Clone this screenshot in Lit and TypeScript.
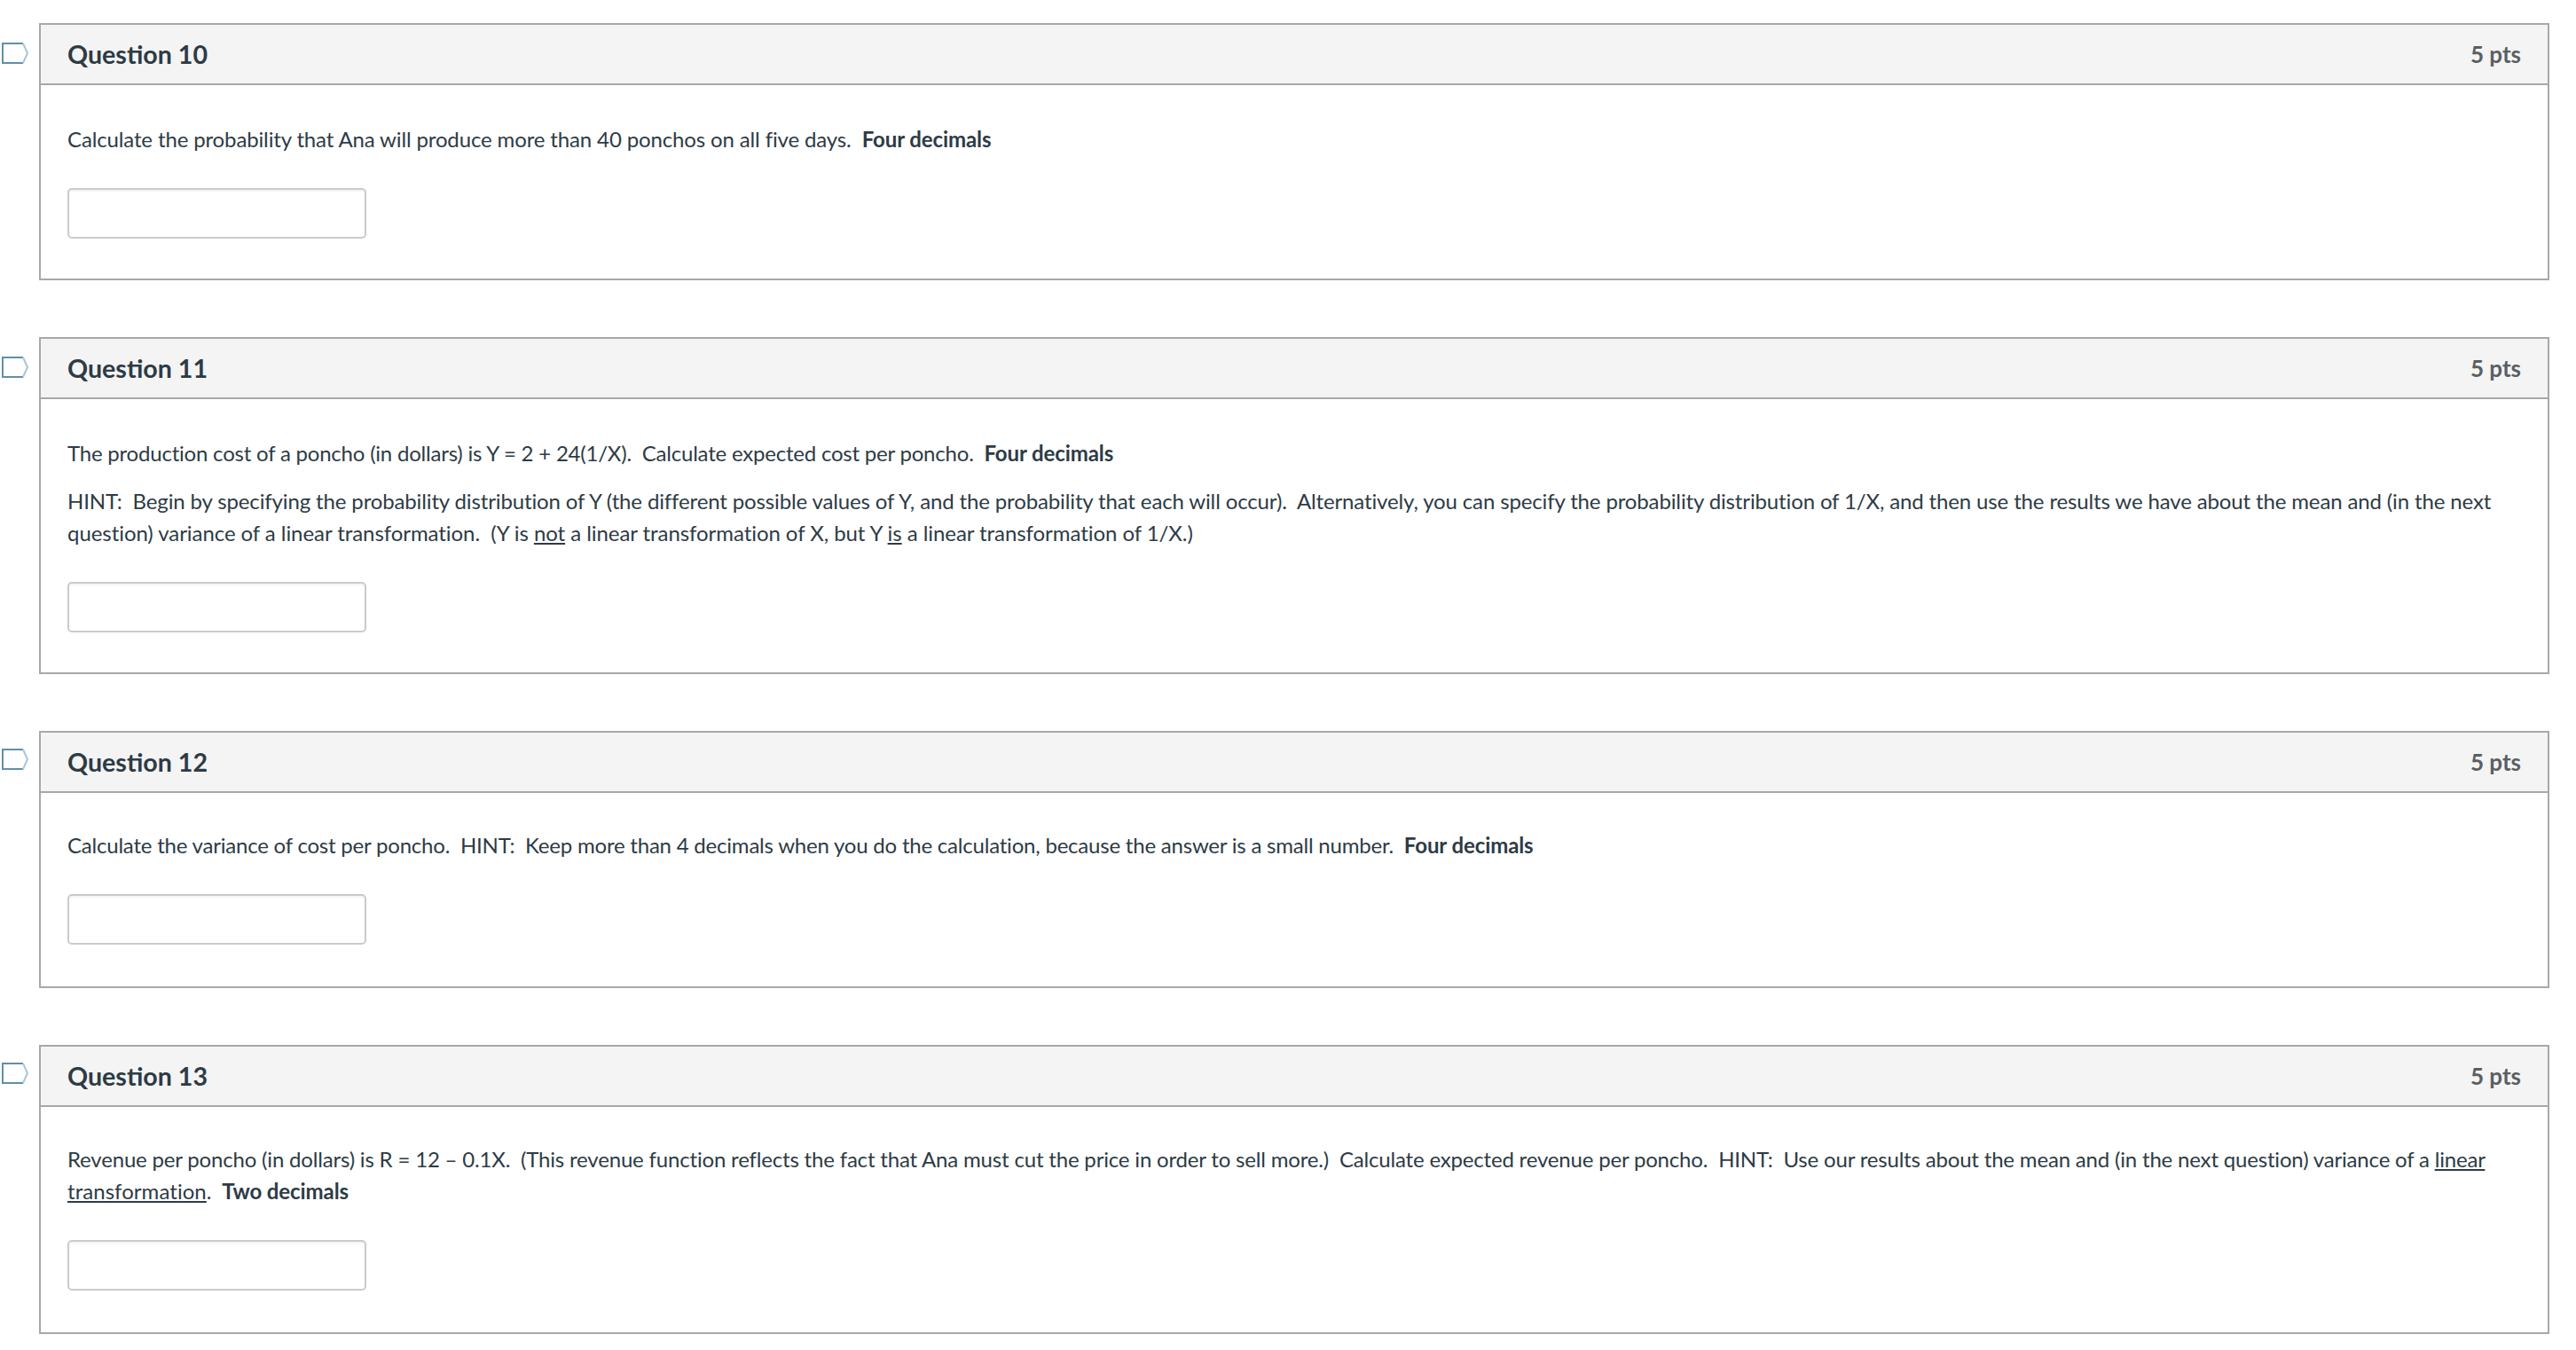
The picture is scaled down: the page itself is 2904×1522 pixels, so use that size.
import { LitElement, html, css } from "lit";
import { customElement } from "lit/decorators.js";

const questions = [
  {
    n: 10,
    raised: false,
    body: html`<p class="loose">Calculate the probability that Ana will produce more than 40 ponchos on all five days.&nbsp; <strong>Four decimals</strong></p>`,
  },
  {
    n: 11,
    raised: false,
    body: html`<p>The production cost of a poncho (in dollars) is Y = 2 + 24(1/X).&nbsp; Calculate expected cost per poncho.&nbsp; <strong>Four decimals</strong></p>
      <p class="loose">HINT:&nbsp; Begin by specifying the probability distribution of Y (the different possible values of Y, and the probability that each will occur).&nbsp; Alternatively, you can specify the probability distribution of 1/X, and then use the results we have about the mean and (in the next <span class="wide">question) variance of a linear transformation.&nbsp; (Y is <u>not</u> a linear transformation of X, but Y <u>is</u> a linear transformation of 1/X.)</span></p>`,
  },
  {
    n: 12,
    raised: true,
    body: html`<p>Calculate the variance of cost per poncho.&nbsp; HINT:&nbsp; Keep more than 4 decimals when you do the calculation, because the answer is a small number.&nbsp; <strong>Four decimals</strong></p>`,
  },
  {
    n: 13,
    raised: true,
    body: html`<p class="mid">Revenue per poncho (in dollars) is R = 12 – 0.1X.&nbsp; (This revenue function reflects the fact that Ana must cut the price in order to sell more.)&nbsp; Calculate expected revenue per poncho.&nbsp; HINT:&nbsp; Use our results about the mean and (in the next question) variance of a <u>linear</u> <u class="wider">transformation</u>.&nbsp; <strong>Two decimals</strong></p>`,
  },
];

@customElement("app-root")
export class AppRoot extends LitElement {
  static styles = css`
    :host {
      display: block;
      font-family: Lato, "Open Sans", sans-serif;
      color: #2d3b45;
      background: #fff;
    }
    .page {
      display: flex;
      flex-direction: column;
      gap: 64px;
      padding: 26px 30px 18px 2px;
    }
    .row {
      display: flex;
      align-items: flex-start;
      gap: 12px;
    }
    .flag {
      flex: none;
      width: 30px;
      height: 24px;
      margin-top: 22px;
    }
    .raised .flag {
      margin-top: 20px;
    }
    .card {
      flex: 1;
      min-width: 0;
      border: 2px solid #a8a8a8;
      background: #fff;
    }
    .head {
      display: flex;
      justify-content: space-between;
      align-items: center;
      height: 68px;
      box-sizing: border-box;
      padding: 0 30px;
      background: #f4f4f4;
      border-bottom: 2px solid #a8a8a8;
    }
    .title {
      font-size: 28.6px;
      font-weight: 700;
    }
    .pts {
      font-size: 26px;
      font-weight: 700;
      color: #5a5f63;
    }
    .body {
      padding: 43px 30px 45px;
      font-size: 24px;
      line-height: 36px;
      letter-spacing: -0.21px;
    }
    .raised .body {
      padding-top: 41px;
      padding-bottom: 47px;
    }
    p {
      margin: 0 0 18px;
    }
    .loose {
      letter-spacing: -0.135px;
    }
    .mid {
      letter-spacing: -0.18px;
    }
    .wide {
      letter-spacing: -0.06px;
    }
    .wider {
      letter-spacing: 0.05px;
    }
    strong {
      letter-spacing: -0.1px;
    }
    .answer {
      display: block;
      width: 337px;
      height: 57px;
      box-sizing: border-box;
      margin-top: 37px;
      border: 2px solid #cbcbcb;
      border-radius: 5px;
      background: #fff;
      box-shadow: inset 0 2px 2px rgba(0, 0, 0, 0.05);
      outline: none;
    }
  `;

  render() {
    return html`<div class="page">
      ${questions.map(
        (q) => html`<div class="row ${q.raised ? "raised" : ""}">
          <svg class="flag" viewBox="0 0 30 24" fill="none">
            <path d="M24 1 L1 1 L1 23 L24 23" stroke="#5f8fab" stroke-width="2" />
            <path d="M24 1 L29 12 L24 23" stroke="#a9c6d8" stroke-width="2" />
          </svg>
          <section class="card">
            <header class="head">
              <span class="title">Question ${q.n}</span>
              <span class="pts">5 pts</span>
            </header>
            <div class="body">
              ${q.body}
              <input class="answer" type="text" />
            </div>
          </section>
        </div>`
      )}
    </div>`;
  }
}
